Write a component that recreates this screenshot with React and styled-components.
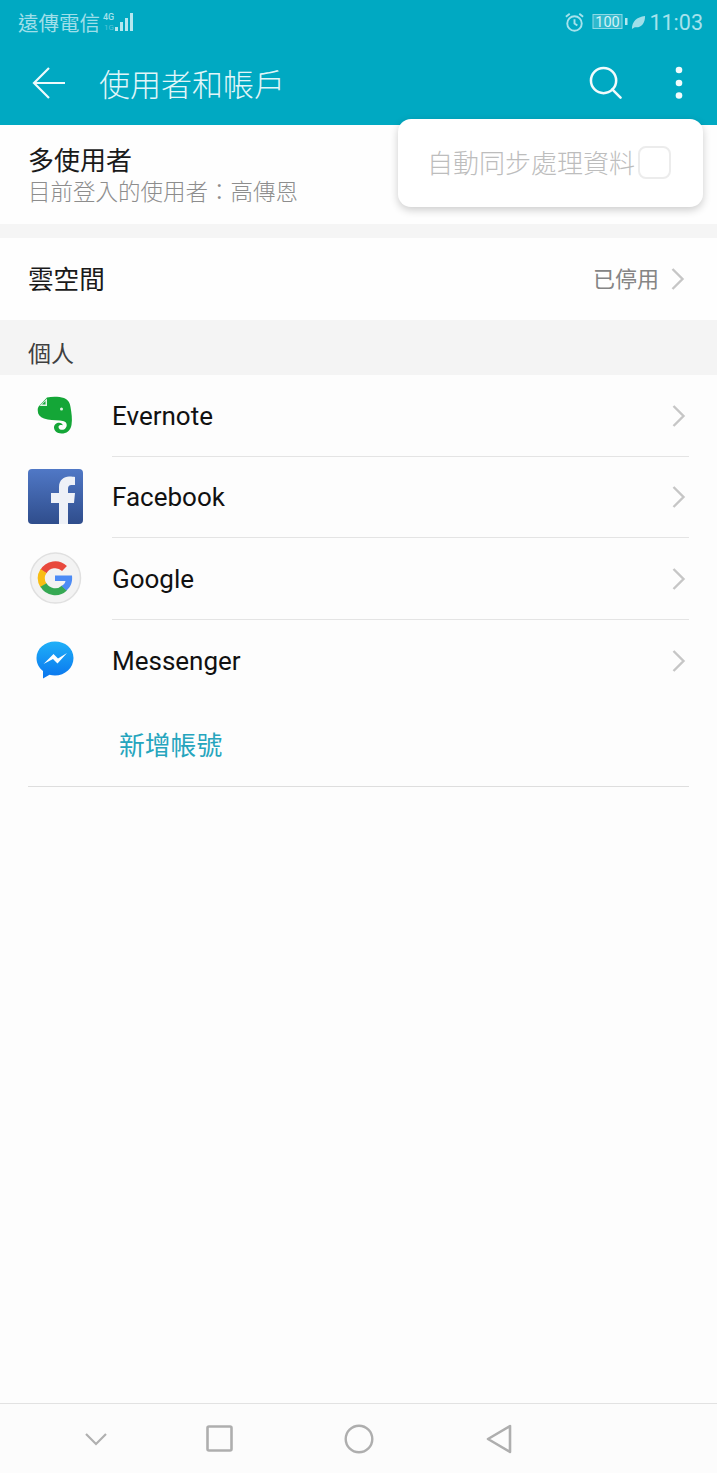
import styled, { createGlobalStyle } from "styled-components";

const cjk = `"Roboto", "Noto Sans CJK TC", sans-serif`;

const GlobalStyle = createGlobalStyle`
  html, body { margin: 0; padding: 0; background: #fdfdfd; }
  * { box-sizing: border-box; }
`;

const Page = styled.div`
  position: relative;
  width: 717px;
  height: 1473px;
  display: flex;
  flex-direction: column;
  background: #fdfdfd;
  font-family: ${cjk};
  overflow: hidden;
`;

const Header = styled.header`
  height: 125px;
  flex: none;
  background: #00a9c2;
  color: #e6f7fa;
  display: flex;
  flex-direction: column;
`;

const StatusBar = styled.div`
  height: 44px;
  padding: 0 14px 0 18px;
  display: flex;
  align-items: center;
  justify-content: space-between;
`;

const StatusGroup = styled.div`
  display: flex;
  align-items: center;
  gap: ${(p) => p.$gap || 0}px;
`;

const Carrier = styled.span`
  font-size: 20.5px;
  color: #9fdfe9;
  margin-right: 2px;
`;

const Clock = styled.span`
  font-size: 21.5px;
  color: #a6e2ec;
`;

const AlarmSlot = styled.span`
  display: flex;
  margin-right: 4px;
`;

const Toolbar = styled.div`
  height: 81px;
  padding: 0 34px 4px 32px;
  display: flex;
  align-items: center;
`;

const Title = styled.h1`
  margin: 0 0 0 33px;
  font-size: 31px;
  font-weight: 300;
  flex: 1;
  color: #e2f6f9;
`;

const ToolbarIcons = styled.div`
  display: flex;
  align-items: center;
  gap: 53px;
`;

const Row = styled.div`
  height: ${(p) => p.$h}px;
  flex: none;
  background: #fefefe;
  padding: 0 32px 0 28px;
  display: flex;
  align-items: center;
  justify-content: space-between;
`;

const Stack = styled.div`
  display: flex;
  flex-direction: column;
  padding-top: 3px;
`;

const RowTitle = styled.span`
  font-size: 26px;
  line-height: 32px;
  color: #1a1a1a;
`;

const CloudTitle = styled(RowTitle)`
  font-size: 25.6px;
  padding-top: 2px;
`;

const RowSub = styled.span`
  font-size: 22.5px;
  line-height: 30px;
  color: #8d8d8d;
  font-weight: 300;
`;

const Gap = styled.div`
  height: 14px;
  flex: none;
  background: #f5f5f5;
`;

const Trailing = styled.div`
  display: flex;
  align-items: center;
  gap: 12px;
  font-size: 22px;
  color: #858585;
`;

const TrailingLabel = styled.span`
  padding-bottom: 4px;
`;

const SectionHead = styled.div`
  height: 55px;
  flex: none;
  background: #f4f4f4;
  padding: 12px 28px 0;
  font-size: 23px;
  line-height: 46px;
  color: #3f3f3f;
`;

const AccountRow = styled.div`
  height: ${(p) => p.$h}px;
  flex: none;
  display: flex;
  align-items: center;
  padding: 0 28px;
`;

const IconSlot = styled.div`
  width: 56px;
  height: 56px;
  flex: none;
  margin: 0 28px 2px -1px;
  display: flex;
  align-items: center;
  justify-content: center;
`;

const AccountBody = styled.div`
  flex: 1;
  height: 100%;
  display: flex;
  align-items: center;
  justify-content: space-between;
  padding-right: 3px;
  margin-left: 1px;
  border-bottom: ${(p) => (p.$last ? "none" : "1px solid #e4e4e4")};
  font-family: "Roboto", sans-serif;
  font-size: 26px;
  color: #111;
`;

const AddRow = styled.div`
  height: 85px;
  flex: none;
  margin: 0 28px;
  padding: 0 0 1px 91px;
  display: flex;
  align-items: center;
  border-bottom: 1px solid #dedede;
  font-size: 25.8px;
  color: #26a5bd;
`;

const Spacer = styled.div`
  flex: 1;
`;

const NavBar = styled.nav`
  height: 70px;
  flex: none;
  border-top: 1px solid #e2e2e2;
  background: #fcfcfc;
  display: grid;
  grid-template-columns: 106px 140px 140px 140px;
  align-items: center;
  justify-items: center;
  padding-left: 43px;
`;

const Popup = styled.div`
  position: absolute;
  left: 398px;
  top: 119px;
  width: 305px;
  height: 88px;
  background: #fff;
  border-radius: 13px;
  box-shadow: 0 3px 9px rgba(0, 0, 0, 0.2);
  display: flex;
  align-items: center;
  padding: 0 32px 2px 29px;
  justify-content: space-between;
  font-size: 26px;
  color: #bdbdbd;
  font-weight: 300;
`;

const PopupLabel = styled.span`
  padding-bottom: 2px;
`;

const CheckBox = styled.span`
  width: 33px;
  height: 33px;
  border: 2px solid #ececec;
  border-radius: 8px;
  flex: none;
`;

const Chevron = () => (
  <svg width="14" height="24" viewBox="0 0 14 24" fill="none" stroke="#c6c6c6" strokeWidth="2.4">
    <path d="M1.5 2l10 10-10 10" />
  </svg>
);

const SignalIcon = () => (
  <svg width="34" height="22" viewBox="0 0 34 22">
    <text x="1" y="9" fontSize="9" fontFamily="Roboto" fontWeight="500" fill="#a6e2ec">4G</text>
    <text x="2" y="19" fontSize="8" fontFamily="Roboto" fill="#5cc6d8">1G</text>
    <g fill="#b5e7ef">
      <rect x="13" y="16" width="3" height="4" />
      <rect x="18" y="11" width="3" height="9" />
      <rect x="23" y="7" width="3" height="13" />
      <rect x="28" y="2" width="3" height="18" />
    </g>
  </svg>
);

const AlarmIcon = () => (
  <svg width="21" height="21" viewBox="0 0 22 22" fill="none" stroke="#a6e2ec" strokeWidth="2">
    <circle cx="11" cy="12" r="7.6" />
    <path d="M11 7.500V12l3 2.200M2 5l4-3.200M20 5l-4-3.200" />
  </svg>
);

const BatteryIcon = () => (
  <svg width="36" height="18" viewBox="0 0 36 18">
    <rect x="1" y="1.500" width="29" height="14" fill="#2fb9cd" stroke="#8fd9e5" strokeWidth="1" />
    <text x="15.500" y="14" textAnchor="middle" fontSize="14.500" fontFamily="Roboto" fill="#d4f2f6">100</text>
    <rect x="33" y="5" width="2.500" height="7" fill="#b5e7ef" />
  </svg>
);

const LeafIcon = () => (
  <svg width="15" height="15" viewBox="0 0 16 16">
    <path d="M1 15C1 7 6 2 15 1c0 8-4 13-11 12L1 15z" fill="#9fdfe9" />
  </svg>
);

const BackIcon = () => (
  <svg width="34" height="34" viewBox="0 0 34 34" fill="none" stroke="#eefafc" strokeWidth="2.200">
    <path d="M33 17H3M17 2L2 17l15 15" />
  </svg>
);

const SearchIcon = () => (
  <svg width="33" height="33" viewBox="0 0 34 34" fill="none" stroke="#f2fbfc" strokeWidth="2.600">
    <circle cx="15" cy="15" r="13" />
    <path d="M24 24l8.500 8.500" strokeLinecap="round" />
  </svg>
);

const MoreIcon = () => (
  <svg width="8" height="34" viewBox="0 0 8 34" fill="#f2fbfc">
    <circle cx="4" cy="4" r="3.300" />
    <circle cx="4" cy="17" r="3.300" />
    <circle cx="4" cy="29.500" r="3.300" />
  </svg>
);

const EvernoteIcon = () => (
  <svg width="36" height="38" viewBox="0 0 36 38">
    <path
      d="M10 1.500C15 .5 22 .5 27 2C31 3.500 33 7 33.500 11C34.500 17 35.500 23 34.500 29C33.500 35 29.500 37.500 24.500 37.500C20 37.500 17 34.500 17 31.500C17 28.500 19.500 26.800 22 26.800C24 26.800 25.500 27.800 25.800 29.500C24.500 28.700 21.500 29 21.500 31C21.500 33 23.500 33.800 25 33.800C28 33.800 29.700 31.500 29.700 29C29.700 26 27 24.800 23 24.500C17 24 12 24 7 22.500C3 21 .8 18.500 .8 15C.6 13 .8 11.500 2 10z"
      fill="#14a637"
    />
    <path d="M10 2.500v7.500H2.500z" fill="#e4f5e8" />
    <path d="M8.500 5v3.500H5z" fill="#14a637" />
    <circle cx="24.500" cy="13" r="1.500" fill="#dff3e4" />
  </svg>
);

const FacebookIcon = () => (
  <svg width="55" height="55" viewBox="0 0 55 55">
    <defs>
      <linearGradient id="fb" x1="0" y1="0" x2="0" y2="1">
        <stop offset="0" stopColor="#5078c6" />
        <stop offset="1" stopColor="#2f4d8c" />
      </linearGradient>
    </defs>
    <rect width="55" height="55" rx="4" fill="url(#fb)" />
    <path
      d="M31 55V34h-8V24h8v-6c0-7 5-10.500 10-10.500 3 0 5 .2 6 .5v8h-3.500c-2.500 0-3.500 1.500-3.500 4v4h7l-1 10h-6v21z"
      fill="#eef1f7"
    />
  </svg>
);

const GoogleIcon = () => (
  <svg width="54" height="54" viewBox="0 0 54 54">
    <circle cx="27.500" cy="27" r="25" fill="#f3f3f3" stroke="#e0e0e0" strokeWidth="1.500" />
    <g fill="none" strokeWidth="7">
      <path d="M15.500 20.500A13.500 13.500 0 0 1 36.500 17.500" stroke="#e8483c" />
      <path d="M15.500 34.500A13.500 13.500 0 0 1 15.500 20" stroke="#f8bd14" />
      <path d="M36.500 37A13.500 13.500 0 0 1 15.500 34" stroke="#35a853" />
    </g>
    <path d="M27 24.500h17c.7 6-1 11.500-5.500 15l-5-4.500c2-1.500 3.500-2.500 4-5H27z" fill="#4c8bf5" />
  </svg>
);

const MessengerIcon = () => (
  <svg width="38" height="38" viewBox="0 0 38 38">
    <defs>
      <linearGradient id="ms" x1="0" y1="0" x2="0" y2="1">
        <stop offset="0" stopColor="#1fb0f8" />
        <stop offset="1" stopColor="#0a75ee" />
      </linearGradient>
    </defs>
    <path
      d="M19 .5C9 .5 .5 7.500 .5 17c0 5.500 2.700 10 6.500 13v7.500l6.500-3.700c1.700.5 3.500.7 5.500.7C29 34.500 37.500 27 37.500 17S29 .5 19 .5z"
      fill="url(#ms)"
    />
    <path d="M7.500 23l10-10 4.500 4.500L31 12l-9.500 10.500-4.500-4.500z" fill="#fff" />
  </svg>
);

const NavChevron = () => (
  <svg width="24" height="14" viewBox="0 0 24 14" fill="none" stroke="#b0b0b0" strokeWidth="2.200">
    <path d="M2 2l10 10L22 2" />
  </svg>
);

const NavSquare = () => (
  <svg width="27" height="27" viewBox="0 0 27 27" fill="none" stroke="#aeaeae" strokeWidth="2.600">
    <rect x="1.500" y="1.500" width="24" height="24" rx="1.500" />
  </svg>
);

const NavCircle = () => (
  <svg width="30" height="30" viewBox="0 0 30 30" fill="none" stroke="#aeaeae" strokeWidth="2.400">
    <circle cx="15" cy="15" r="13.300" />
  </svg>
);

const NavBack = () => (
  <svg width="26" height="30" viewBox="0 0 26 30" fill="none" stroke="#aeaeae" strokeWidth="2.600" strokeLinejoin="round">
    <path d="M24 2v26L2 15z" />
  </svg>
);

const accounts = [
  { name: "Evernote", icon: <EvernoteIcon />, h: 82 },
  { name: "Facebook", icon: <FacebookIcon />, h: 81 },
  { name: "Google", icon: <GoogleIcon />, h: 82 },
  { name: "Messenger", icon: <MessengerIcon />, h: 82, last: true },
];

export default function App() {
  return (
    <Page>
      <GlobalStyle />
      <Header>
        <StatusBar>
          <StatusGroup>
            <Carrier>遠傳電信</Carrier>
            <SignalIcon />
          </StatusGroup>
          <StatusGroup $gap={3}>
            <AlarmSlot>
              <AlarmIcon />
            </AlarmSlot>
            <BatteryIcon />
            <LeafIcon />
            <Clock>11:03</Clock>
          </StatusGroup>
        </StatusBar>
        <Toolbar>
          <BackIcon />
          <Title>使用者和帳戶</Title>
          <ToolbarIcons>
            <SearchIcon />
            <MoreIcon />
          </ToolbarIcons>
        </Toolbar>
      </Header>

      <Row $h={99}>
        <Stack>
          <RowTitle>多使用者</RowTitle>
          <RowSub>目前登入的使用者：高傳恩</RowSub>
        </Stack>
      </Row>
      <Gap />
      <Row $h={82}>
        <CloudTitle>雲空間</CloudTitle>
        <Trailing>
          <TrailingLabel>已停用</TrailingLabel>
          <Chevron />
        </Trailing>
      </Row>
      <SectionHead>個人</SectionHead>

      {accounts.map((a) => (
        <AccountRow key={a.name} $h={a.h}>
          <IconSlot>{a.icon}</IconSlot>
          <AccountBody $last={a.last}>
            {a.name}
            <Chevron />
          </AccountBody>
        </AccountRow>
      ))}
      <AddRow>新增帳號</AddRow>
      <Spacer />

      <NavBar>
        <NavChevron />
        <NavSquare />
        <NavCircle />
        <NavBack />
      </NavBar>

      <Popup>
        <PopupLabel>自動同步處理資料</PopupLabel>
        <CheckBox />
      </Popup>
    </Page>
  );
}
